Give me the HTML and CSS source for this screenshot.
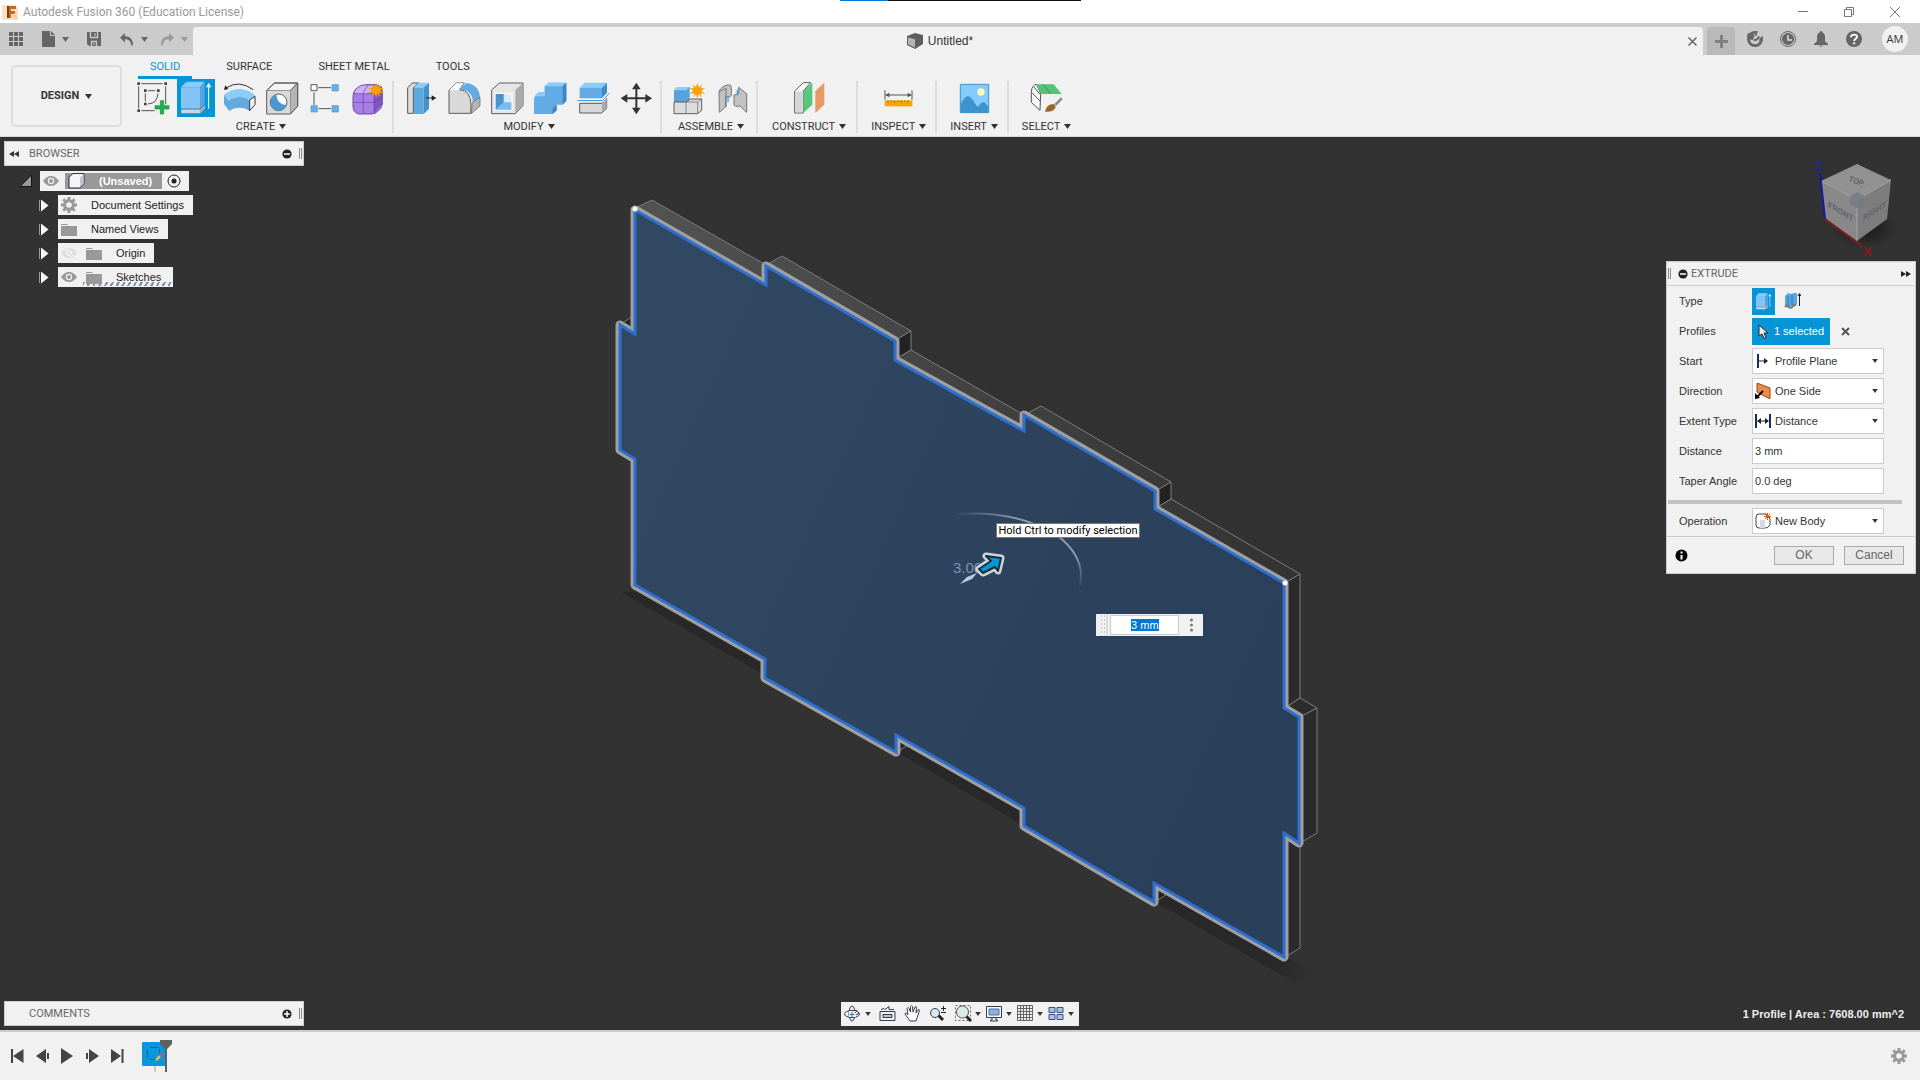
FILE: index.html
```html
<!DOCTYPE html>
<html lang="en">
<head>
<meta charset="utf-8">
<title>Autodesk Fusion 360 (Education License)</title>
<link rel="stylesheet" href="styles.css">
</head>
<body>
<svg class="defs" aria-hidden="true">
  <symbol id="caret" viewBox="0 0 7 5"><path d="M0 0h7L3.500 5z"/></symbol>
  <symbol id="gear" viewBox="0 0 16 16"><path fill-rule="evenodd" d="M6.500 0h3v2.300l1.500.6L12.700 1.300l2 2L13.100 5l.6 1.500H16v3h-2.300l-.6 1.500 1.600 1.700-2 2L11 13.100l-1.500.6V16h-3v-2.300L5 13.100l-1.700 1.600-2-2L2.900 11l-.6-1.500H0v-3h2.300L2.900 5 1.300 3.300l2-2L5 2.900l1.500-.6zM8 5.200a2.800 2.800 0 1 0 0 5.600 2.800 2.800 0 0 0 0-5.600z"/></symbol>
  <symbol id="folder" viewBox="0 0 16 13"><path d="M0 1h6l1 2h9v10H0z"/><path d="M0 2.500h6.500M8 1.500h8" stroke="#f1f1f1"/></symbol>
  <symbol id="eye" viewBox="0 0 16 12"><path d="M0 6Q3.500 1 8 1t8 5q-3.500 5-8 5T0 6z"/><circle cx="8" cy="6" r="3.200" fill="#f1f1f1"/><circle cx="8" cy="6" r="2"/></symbol>
  <symbol id="twist" viewBox="0 0 10 13"><path d="M.5 1v11" stroke="#999"/><path d="M2 .5l7.500 6-7.500 6z" fill="#f6f6f6"/></symbol>
  <symbol id="minus" viewBox="0 0 10 10"><circle cx="5" cy="5" r="4.600" fill="#222"/><path d="M2 5h6" stroke="#fff" stroke-width="1.500"/></symbol>
  <symbol id="extrude" viewBox="531 237 114 114">
    <path d="M544 326v14h56l13-13v-13z" fill="#d5d5d5"/><path d="M599 341l15-14v-14l-15 14z" fill="#aaa"/>
    <path d="M543 262l16-17h55l-14 17z" fill="#8acbfb"/><path d="M543 262h57v64h-57z" fill="#84c4f7"/><path d="M600 262l14-17v66l-14 15z" fill="#57a4de"/>
    <path d="M543 327h57l14-14" stroke="#1b7fc4" stroke-width="3" fill="none"/><path d="M626 326v-70" stroke="#fff" stroke-width="3"/><path d="M618 262l8-14 8 14z" fill="#fff"/>
  </symbol>
  <symbol id="star" viewBox="-24 -24 48 48"><path fill="#f8a100" d="M0-24L4-10 14-19 10-7 24-7 12 0 23 9 9 8 13 21 3 11 0 24-4 11-13 20-9 8-23 9-12 0-24-7-10-7-14-19-4-10z"/></symbol>
</svg>

<header class="titlebar">
  <svg class="app-logo" viewBox="0 0 16 16" width="16" height="16"><path d="M0 1h13l3 3v12H0z" fill="#fbe0c8"/><path d="M5 2h9v3H9v2h4v3H9v4H5z" fill="#c86a1c"/><path d="M5 2h2v12H5z" fill="#7d3c0c"/><path d="M9 12h5v3" stroke="#f0b98a" fill="none"/></svg>
  <span class="app-title">Autodesk Fusion 360 (Education License)</span>
  <span class="share-strip"></span>
  <div class="window-controls">
    <button aria-label="Minimize"><svg width="12" height="12"><path d="M1 5.500h10" stroke="#777"/></svg></button>
    <button aria-label="Restore"><svg width="12" height="12" fill="none" stroke="#777"><path d="M1.500 3.500h7v7h-7zM3.500 3V1.500h7v7H9"/></svg></button>
    <button aria-label="Close"><svg width="12" height="12"><path d="M1 1l10 10M11 1L1 11" stroke="#777"/></svg></button>
  </div>
</header>

<div class="tabbar">
  <div class="quick">
    <button aria-label="Data panel"><svg width="14" height="14" fill="#666"><path d="M0 0h4v4H0zM5 0h4v4H5zM10 0h4v4h-4zM0 5h4v4H0zM5 5h4v4H5zM10 5h4v4h-4zM0 10h4v4H0zM5 10h4v4H5zM10 10h4v4h-4z"/></svg></button>
    <button class="q-file" aria-label="File"><svg width="13" height="16" fill="#666"><path d="M0 0h8v5h5v11H0zM9 0l4 4H9z"/></svg><svg class="caret"><use href="#caret"/></svg></button>
    <button class="q-save" aria-label="Save"><svg width="14" height="14"><path d="M0 0h14v14H2l-2-2z" fill="#666"/><path d="M3.500 0v5.500h7V0M4.500 14V9.500h5V14" stroke="#cbcbcb" fill="none" stroke-width="1.300"/><path d="M8 1v3M7 11v2" stroke="#cbcbcb"/></svg></button>
    <button class="q-undo" aria-label="Undo"><svg width="14" height="13"><path d="M5 0v3.200c5 0 8 3 8 9-.7 0-2 .3-2 0 0-4-2-6-6-6V9.500L0 4.700z" fill="#666"/></svg><svg class="caret"><use href="#caret"/></svg></button>
    <button class="q-redo" aria-label="Redo"><svg width="14" height="13"><path d="M9 0v3.200C4 3.200 1 6 1 12.200h2c0-4 2-6 6-6V9.500l5-4.800z" fill="#999"/></svg><svg class="caret"><use href="#caret"/></svg></button>
  </div>
  <div class="doc-tab">
    <div class="doc-name"><svg width="16" height="16"><path d="M0 3l8-3 8 2v9l-8 5-8-4z" fill="#5e5e5e"/><path d="M1 4.500l7 1.700v8.300l-7-3.200z" fill="#b5b5b5"/></svg><span>Untitled*</span></div>
    <button class="doc-close" aria-label="Close tab"><svg width="9" height="9"><path d="M.5.5l8 8M8.500.5l-8 8" stroke="#666" stroke-width="1.500"/></svg></button>
  </div>
  <button class="new-tab" aria-label="New tab"><svg width="13" height="13"><path d="M6.500 0v13M0 6.500h13" stroke="#808080" stroke-width="3"/></svg></button>
  <div class="tools-right">
    <button aria-label="Extensions"><svg width="16" height="16" viewBox="321 93 48 48"><path d="M345 93a24 24 0 1 0 24 24q0-6-2-10l-9 9q3 16-13 17-15-1-15-15 1-14 13-16l8-8z" fill="#666"/><path d="M322 117v-16l14-3 8 10-6 12z" fill="#666"/><path d="M341 121l9-2 8-9M351 93l-5 14" stroke="#666" stroke-width="6" fill="none"/></svg></button>
    <button aria-label="Job status"><svg width="16" height="16" fill="none" stroke="#666"><circle cx="8" cy="8" r="7.500"/><circle cx="8" cy="8" r="5.500" fill="#666"/><path d="M8 4v5h4" stroke="#ddd" stroke-width="1.500"/></svg></button>
    <button aria-label="Notifications"><svg width="14" height="16" fill="#666"><path d="M7 0q1.500 0 1.500 1.500Q11 2.500 11 6v4l3 3v1H0v-1l3-3V6q0-3.500 2.500-4.500Q5.500 0 7 0zM5 14.500h4L7 16z"/></svg></button>
    <button aria-label="Help"><svg width="16" height="16"><circle cx="8" cy="8" r="8" fill="#666"/><path d="M5 6.200Q5 3.600 8 3.600t3 2.200c0 2-2.800 1.900-2.800 4.200M7.200 12.200h2" stroke="#fff" stroke-width="1.900" fill="none"/></svg></button>
    <button class="avatar">AM</button>
  </div>
</div>

<div class="ribbon">
  <button class="workspace">DESIGN <svg class="caret"><use href="#caret"/></svg></button>
  <div class="ribbon-main">
    <nav class="ribbon-tabs"><a href="#solid" class="active">SOLID</a><a href="#surface">SURFACE</a><a href="#sheet">SHEET METAL</a><a href="#tools">TOOLS</a></nav>
    <div class="groups">
      <section class="group">
        <div class="icons">
          <button aria-label="Create sketch"><svg width="33" height="33" viewBox="411 245 99 99" fill="none" stroke="#555" stroke-width="3"><path d="M424 250h64M497 258v54M416 258v66M424 331h40M444 271h22M436 279v24M474 279q-2 30-30 32"/><path d="M412 246h8v8h-8zM493 246h8v8h-8zM412 327h8v8h-8zM432 267h8v8h-8zM471 267h8v8h-8zM432 307h8v8h-8z" fill="#444" stroke="none"/><path d="M481 301h10v15h16v10h-16v15h-10v-15h-16v-10h16z" fill="#20b04b" stroke="#149138" stroke-width="2"/></svg></button>
          <button class="on" aria-label="Extrude"><svg width="38" height="38"><use href="#extrude"/></svg></button>
          <button aria-label="Revolve"><svg width="33" height="33" viewBox="667 246 99 99"><path d="M670 284q22-17 46-17 27 0 48 20l-18 14q-14-10-30-10-17 0-31 11z" fill="#8accfa"/><path d="M670 284l15 18q14-11 31-11t30 10v31q-14-10-30-9-18 0-30 10l-16-21z" fill="#63a9df"/><path d="M747 300l16-11v25l-16 18z" fill="#f3f3f3" stroke="#333" stroke-width="3"/><path d="M676 264q40-26 81 5" fill="none" stroke="#333" stroke-width="3"/><path d="M670 270l4-14 9 11z" fill="#222"/></svg></button>
          <button aria-label="Hole"><svg width="33" height="33" viewBox="797 245 99 99" stroke="#5d5d5d" stroke-width="3"><path d="M799 271l23-23h70l-22 23z" fill="#f4f4f4"/><path d="M870 271l22-23v69l-22 24z" fill="#b6b6b6"/><path d="M799 271h71v70h-71z" fill="#d9d9d9" stroke="none"/><path d="M799 271v70h71l22-23v-70h-70z" fill="none"/><circle cx="835" cy="306" r="25" fill="#fff"/><path d="M828 283q2 30 31 31-5 17-25 17-23-2-23-25 2-19 17-23z" fill="#4a97d3" stroke="none"/></svg></button>
          <button aria-label="Pattern"><svg width="33" height="33" viewBox="922 245 99 99" stroke="#555" stroke-width="3"><path d="M950 262h38M937 276v38M950 325h38"/><path d="M928 253h18v18h-18z" fill="#fff"/><g fill="#66afe6" stroke="#4b97cf" stroke-width="2"><path d="M991 253h19v19h-19zM928 316h19v19h-19zM991 316h19v19h-19z"/></g></svg></button>
          <button aria-label="Create form"><svg width="33" height="33" viewBox="1054 245 99 99"><path d="M1057 290q0-20 16-30 8-7 25-7h28q18 4 19 22v36q-2 14-14 22-6 8-20 8h-36q-18-4-18-22z" fill="#a77de6" stroke="#7248a8" stroke-width="3"/><path d="M1062 276q8-18 24-20h32l-8 20-16 5h-26z" fill="#cfb1fa"/><path d="M1120 276l24-20v56l-24 27z" fill="#7c55bd"/><path d="M1059 306h61l24-20M1088 341v-65l14-22M1120 276v62M1060 280h60" stroke="#6c3fae" stroke-width="2" fill="none"/><use href="#star" x="1103" y="246" width="47" height="47"/></svg></button>
        </div>
        <button class="group-label">CREATE <svg class="caret"><use href="#caret"/></svg></button>
      </section>
      <section class="group">
        <div class="icons">
          <button aria-label="Press pull"><svg width="33" height="33" viewBox="15 65 99 99"><path d="M23 82l14-14h20L40 82v77H23z" fill="#ddd" stroke="#555" stroke-width="3"/><path d="M41 82l15-15h31L71 82z" fill="#8accfa"/><path d="M42 82h29v79H42z" fill="#5fa8e0"/><path d="M71 82l16-15v78l-16 16z" fill="#4792cd"/><path d="M78 113h20" stroke="#222" stroke-width="3"/><path d="M95 105l14 8-14 8z" fill="#222"/></svg></button>
          <button aria-label="Fillet"><svg width="33" height="33" viewBox="146 65 99 99"><path d="M149 90l22-22h24l-14 20q34 3 34 46l-1 25h-65z" fill="#d9d9d9" stroke="#5d5d5d" stroke-width="3"/><path d="M151 89l20-20h22l-16 20z" fill="#fff"/><path d="M181 87l20-19q38 4 41 44l-21 14q-2-36-40-39z" fill="#63ace3"/><path d="M219 126l23-15v26l-26 23z" fill="#b4b4b4" stroke="#5d5d5d" stroke-width="2"/></svg></button>
          <button aria-label="Shell"><svg width="33" height="33" viewBox="275 65 99 99"><path d="M277 89l23-21h71v68l-23 24h-71z" fill="#e6e6e6" stroke="#5d5d5d" stroke-width="3"/><path d="M348 89l22-20v67l-22 23z" fill="#ababab"/><path d="M285 97h55v54h-55z" fill="#f8f8f8"/><path d="M289 101h47v47h-47z" fill="#d7ebfb"/><path d="M289 101h24v26l-24 21z" fill="#4792cf"/><path d="M289 148l24-22h23v22z" fill="#75bcf2"/></svg></button>
          <button aria-label="Combine"><svg width="33" height="33" viewBox="404 65 99 99"><path d="M406 108l12-12h18V78l12-11h53v54l-11 12h-18v17l-11 11h-65z" fill="#62abe4"/><path d="M406 108l12-12h18V78l12-11h53l-11 11h-53v30z" fill="#8accfa"/><path d="M490 78l11-11v54l-11 12zM460 144l12-11v17l-12 11z" fill="#3c87c1"/></svg></button>
          <button aria-label="Split body"><svg width="33" height="33" viewBox="533 65 99 99"><path d="M541 82l15-15h67l-15 15z" fill="#8accfa"/><path d="M541 82h67v32h-67z" fill="#62abe4"/><path d="M608 82l15-15v30l-15 16z" fill="#3f8ac4"/><path d="M541 129h67l14-15v29l-14 15h-67z" fill="#d8d8d8" stroke="#5d5d5d" stroke-width="3"/><path d="M608 129l14-15v29l-14 15z" fill="#aaa"/><path d="M534 121h76l20-23" fill="none" stroke="#fff" stroke-width="8"/><path d="M534 121h76l20-23" fill="none" stroke="#168ce0" stroke-width="3"/></svg></button>
          <button aria-label="Move"><svg width="33" height="33" viewBox="662 64 99 99"><path d="M711 76v75M673 113h76" stroke="#333" stroke-width="6"/><path d="M711 66l13 20h-26zM711 161l13-20h-26zM664 113l20-13v26zM758 113l-20-13v26z" fill="#333"/></svg></button>
        </div>
        <button class="group-label">MODIFY <svg class="caret"><use href="#caret"/></svg></button>
      </section>
      <section class="group">
        <div class="icons">
          <button aria-label="New component"><svg width="33" height="33" viewBox="823 65 99 99"><path d="M826 90l10-10h37v45h-47z" fill="#58a2dc"/><path d="M826 90l10-10h37l-10 10z" fill="#8accfa"/><path d="M826 125h36l14-9h33v34l-12 10h-71z" fill="#ddd" stroke="#5d5d5d" stroke-width="3"/><path d="M862 125h35l11-9M897 125v34M862 125v34" stroke="#5d5d5d" stroke-width="2" fill="none"/><use href="#star" x="872" y="67" width="48" height="48"/></svg></button>
          <button aria-label="Joint"><svg width="33" height="33" viewBox="952 65 99 99" stroke="#777" stroke-width="3"><path d="M961 94q6-16 28-21 10 0 9 9v24l-8 5-9-3v32l-19 16z" fill="#c2c2c2"/><path d="M962 94l20-10v56" fill="none"/><path d="M1020 81l24 19v56l-20-19-13 1-5-4v-30l14-4z" fill="#c2c2c2"/><path d="M988 109v17M1016 88v17" stroke="#168ce0"/></svg></button>
        </div>
        <button class="group-label">ASSEMBLE <svg class="caret"><use href="#caret"/></svg></button>
      </section>
      <section class="group single">
        <div class="icons">
          <button aria-label="Offset plane"><svg width="33" height="33" viewBox="41 245 99 99"><path d="M46 272l26-25h22L72 272v66H46z" fill="#f8f8f8" stroke="#5d5d5d" stroke-width="3"/><path d="M48 274h22v62H48z" fill="#d5d5d5"/><path d="M72 272l27-25v66l-27 25z" fill="#58c67c"/><path d="M108 272l27-25v66l-27 25z" fill="#e89a66"/></svg></button>
        </div>
        <button class="group-label">CONSTRUCT <svg class="caret"><use href="#caret"/></svg></button>
      </section>
      <section class="group single">
        <div class="icons">
          <button aria-label="Measure"><svg width="33" height="33" viewBox="308 245 99 99"><path d="M317 270v28M398 270v28M320 284h76" stroke="#555" stroke-width="3"/><path d="M318 284l12-7v14zM397 284l-12-7v14z" fill="#555"/><path d="M316 300h83v18h-83z" fill="#f9a600"/><path d="M326 300v8M336 300v5M346 300v8M356 300v5M366 300v8M376 300v5M386 300v8" stroke="#7a5a10" stroke-width="2"/></svg></button>
        </div>
        <button class="group-label">INSPECT <svg class="caret"><use href="#caret"/></svg></button>
      </section>
      <section class="group single">
        <div class="icons">
          <button aria-label="Insert canvas"><svg width="33" height="33" viewBox="528 243 99 99"><path d="M535 250h85v85h-85z" fill="#86cbff" stroke="#3d93cf" stroke-width="3"/><circle cx="597" cy="273" r="11" fill="#fff9c0"/><path d="M536 310q12-24 22-24t25 28l6 3q8-13 15-13t15 14v17h-83z" fill="#3d93cf"/></svg></button>
        </div>
        <button class="group-label">INSERT <svg class="caret"><use href="#caret"/></svg></button>
      </section>
      <section class="group single">
        <div class="icons">
          <button aria-label="Select"><svg width="33" height="33" viewBox="745 245 99 99"><path d="M749 273q2-19 16-21l12 27-2 51-26-24z" fill="#fafafa" stroke="#555" stroke-width="3"/><path d="M750 276l25 26M757 260l18 22" stroke="#555" stroke-width="3"/><path d="M762 252h54l24 29h-61z" fill="#53c377"/><path d="M785 252l22 29" stroke="#2b9a50" stroke-width="3"/><path d="M818 311l20-20 5 5-19 20z" fill="#888"/><path d="M790 334q4-23 25-23 6 2 7 8-4 17-32 15z" fill="#9a672b"/></svg></button>
        </div>
        <button class="group-label">SELECT <svg class="caret"><use href="#caret"/></svg></button>
      </section>
    </div>
  </div>
</div>

<main class="viewport">
  <svg class="model" viewBox="0 137 1920 893" preserveAspectRatio="xMidYMid meet">
    <defs>
      <linearGradient id="face" x1="0" y1="0" x2="1" y2=".5"><stop offset="0" stop-color="#324963"/><stop offset="1" stop-color="#2a405a"/></linearGradient>
      <linearGradient id="top" gradientUnits="userSpaceOnUse" x1="650" y1="200" x2="1290" y2="570"><stop offset="0" stop-color="#525252"/><stop offset="1" stop-color="#333"/></linearGradient>
      <linearGradient id="shadow" gradientUnits="userSpaceOnUse" x1="1280" y1="960" x2="1312" y2="982"><stop offset="0" stop-color="#282828"/><stop offset="1" stop-color="#323232"/></linearGradient>
      <linearGradient id="arc" gradientUnits="userSpaceOnUse" x1="955" y1="510" x2="1082" y2="588"><stop offset="0" stop-color="#909baa" stop-opacity="0"/><stop offset=".4" stop-color="#909baa"/><stop offset=".85" stop-color="#909baa"/><stop offset="1" stop-color="#909baa" stop-opacity="0"/></linearGradient>
      <path id="plate" d="M635 210L766 285V266L895 341V360L1024 431V415L1155 491V509L1284 583V708L1299 717V843L1284 833V957L1154 883V902L1024 826V808L896 735V752L765 678V659L635 585V459L620 450V325L635 334z"/>
    </defs>
    <path d="M621 592L1300 986L1318 976L660 590z" fill="url(#shadow)"/>
    <g fill="url(#top)" stroke="#7c7c7c">
      <path d="M619 325l16-10v20z" fill="#272727"/>
      <path d="M635 208L652 200L766 265v20z"/>
      <path d="M766 265L782 256L911 331L896 340z"/>
      <path d="M896 340L911 331V350L896 359z" fill="#222"/>
      <path d="M896 359L911 350L1024 415V431z"/>
      <path d="M1024 415L1041 406L1171 482L1156 491z"/>
      <path d="M1156 491L1171 482V499L1156 508z" fill="#222"/>
      <path d="M1156 508L1171 499L1300 574L1285 583z"/>
      <path d="M1285 583L1300 574V698L1285 708z" fill="#2b2b2b"/>
      <path d="M1285 708L1300 698L1317 708L1300 717z" fill="#2c2c2c"/>
      <path d="M1300 717L1317 708V833L1300 843z" fill="#2b2b2b"/>
      <path d="M1285 833L1300 843V948L1285 957z" fill="#2b2b2b"/>
      <path d="M1155 883L1170 892L1155 902zM897 735l14 8-14 9z" fill="#222"/>
    </g>
    <use href="#plate" fill="none" stroke="#a0a0a0" stroke-width="9" stroke-linejoin="round"/>
    <use href="#plate" fill="url(#face)" stroke="#2f6fd0" stroke-width="3"/>
    <circle cx="635" cy="209" r="2.500" fill="#fff"/><circle cx="1285" cy="583" r="2.500" fill="#fff"/>
    <path d="M957 514Q1018 510 1058 536Q1086 558 1080 586" fill="none" stroke="url(#arc)" stroke-width="2"/>
    <text x="953" y="573" class="dimension">3.00</text>
    <path d="M960 584l7-7 10-4-5 6z" fill="#bccbe0"/>
    <path d="M979 569L991 561L986 556L1001 558L998 571L995 567L983 573z" fill="#ddd" stroke="#d0d4d8" stroke-width="7" stroke-linejoin="round"/>
    <path d="M979 569L991 561L986 556L1001 558L998 571L995 567L983 573z" fill="#0a95d0" stroke="#10303f" stroke-width="2" stroke-linejoin="round"/>
  </svg>

  <svg class="viewcube" width="90" height="110" viewBox="1810 150 90 110">
    <defs><radialGradient id="cs"><stop offset="0" stop-color="#181818"/><stop offset="1" stop-color="#181818" stop-opacity="0"/></radialGradient></defs>
    <ellipse cx="1864" cy="228" rx="34" ry="20" fill="url(#cs)"/>
    <path d="M1857 164L1891 180L1857 200L1821 181z" fill="#919191"/><path d="M1821 181L1857 200V241L1825 219z" fill="#888"/><path d="M1857 200L1891 180L1887 219L1857 241z" fill="#7d7d7d"/>
    <path d="M1821 181L1857 200L1891 180M1857 200V241" stroke="#a5a5a5" fill="none"/>
    <path d="M1850 196l7-4 7 4v8l-7 4-7-4z" fill="#737a85" opacity=".8"/>
    <path d="M1820 173L1825 219" stroke="#1616a8" stroke-width="2"/><path d="M1825 219L1862 246" stroke="#8b1a1a" stroke-width="2"/>
    <text x="1815" y="171" class="axis" fill="#24249a">Z</text><text x="1863" y="256" class="axis" fill="#8b1a1a">X</text>
    <g class="cube-text"><text transform="translate(1848 181) rotate(20)">TOP</text><text transform="translate(1828 207) skewY(30)">FRONT</text><text transform="translate(1863 221) skewY(-32)">RIGHT</text></g>
  </svg>

  <aside class="left-dock">
    <div class="bar browser-bar"><svg width="10" height="6" fill="#333"><path d="M5 0v6L0 3zM10 0v6L5 3z"/></svg><span>BROWSER</span><button aria-label="Collapse"><svg width="10" height="10"><use href="#minus"/></svg></button><i class="grip"></i></div>
    <ul class="tree">
      <li class="root"><svg class="twist" width="12" height="12"><path d="M11.500 0v11.500H0z" fill="#999" stroke="#111"/></svg>
        <div class="node"><svg class="eye"><use href="#eye"/></svg><span class="selected"><svg width="17" height="16"><path d="M1 4l4-3.500h11v10L12 15H1z" fill="#f5f5f7" stroke="#2d3038"/><path d="M12 4.500l3.500-3.500v9.500L12 14.500z" fill="#c2c5cd"/></svg><b>(Unsaved)</b></span><svg width="14" height="14"><circle cx="7" cy="7" r="6" fill="none" stroke="#222"/><circle cx="7" cy="7" r="2.500" fill="#222"/></svg></div></li>
      <li><svg class="twist" width="10" height="13"><use href="#twist"/></svg><div class="node"><svg width="16" height="16" fill="#999"><use href="#gear"/></svg><span>Document Settings</span></div></li>
      <li><svg class="twist" width="10" height="13"><use href="#twist"/></svg><div class="node"><svg width="16" height="13" fill="#999"><use href="#folder"/></svg><span>Named Views</span></div></li>
      <li><svg class="twist" width="10" height="13"><use href="#twist"/></svg><div class="node"><svg class="eye off" viewBox="0 0 16 12"><use href="#eye"/><path d="M2 0l12 12" stroke="#f1f1f1" stroke-width="3"/><path d="M2 0l12 12" stroke="#ddd"/></svg><svg width="16" height="13" fill="#999"><use href="#folder"/></svg><span>Origin</span></div></li>
      <li><svg class="twist" width="10" height="13"><use href="#twist"/></svg><div class="node hatched"><svg class="eye"><use href="#eye"/></svg><svg width="16" height="13" fill="#999"><use href="#folder"/></svg><span>Sketches</span></div></li>
    </ul>
  </aside>

  <form class="extrude">
    <header><i class="grip"></i><svg width="10" height="10"><use href="#minus"/></svg><span>EXTRUDE</span><svg class="more" width="10" height="6" fill="#222"><path d="M0 0l5 3-5 3zM5 0l5 3-5 3z"/></svg></header>
    <div class="fields">
      <div class="row"><span class="lbl">Type</span><button type="button" class="type on" aria-label="Extrude"><svg width="19" height="19"><use href="#extrude"/></svg></button><button type="button" class="type" aria-label="Thin extrude"><svg width="17" height="18"><path d="M1 4l3-3 3 1 3-1h3v11l-3 3-3-1-3 2-3-2z" fill="#5ba7df"/><path d="M4 4v10M8 3v10" stroke="#2f76ad"/><path d="M1 15q2-3 4 0 2 2 4-1l3-2" stroke="#777" fill="none" stroke-width="2"/><path d="M15.500 14V3" stroke="#222"/><path d="M13.500 4l2-3 2 3z" fill="#222"/></svg></button></div>
      <div class="row"><span class="lbl">Profiles</span><button type="button" class="profile"><svg width="11" height="15"><path d="M1 1v11l3-2 2 4.500 2-1L6 9h4z" fill="#eee" stroke="#222"/></svg>1 selected</button><button type="button" class="clear" aria-label="Clear"><svg width="9" height="9"><path d="M1 1l7 7M8 1L1 8" stroke="#555" stroke-width="2"/></svg></button></div>
      <div class="row"><label class="lbl" for="start">Start</label><div class="pick"><svg width="16" height="16"><path d="M3 1v14" stroke="#16305c" stroke-width="2"/><path d="M4 8h6" stroke="#222"/><path d="M9 5l4 3-4 3z" fill="#222"/></svg><select id="start"><option>Profile Plane</option></select><svg class="caret"><use href="#caret"/></svg></div></div>
      <div class="row"><label class="lbl" for="direction">Direction</label><div class="pick"><svg width="16" height="16"><path d="M2 0l13 5v11L2 9z" fill="#ed8a48" stroke="#8f481d"/><path d="M8 8l-6 6" stroke="#000" stroke-width="2"/><path d="M0 16v-6l5 5z"/></svg><select id="direction"><option>One Side</option></select><svg class="caret"><use href="#caret"/></svg></div></div>
      <div class="row"><label class="lbl" for="extent">Extent Type</label><div class="pick"><svg width="16" height="16"><path d="M1 1v14M15 1v14" stroke="#16305c" stroke-width="2"/><path d="M3 8h10" stroke="#222"/><path d="M2 8l4-3v6zM14 8l-4-3v6z" fill="#222"/></svg><select id="extent"><option>Distance</option></select><svg class="caret"><use href="#caret"/></svg></div></div>
      <div class="row"><label class="lbl" for="distance">Distance</label><input id="distance" value="3 mm"></div>
      <div class="row"><label class="lbl" for="taper">Taper Angle</label><input id="taper" value="0.0 deg"></div>
      <hr>
      <div class="row"><label class="lbl" for="operation">Operation</label><div class="pick"><svg width="16" height="16"><path d="M1 4q0-3 3-3h7q4 2 4 5v6q-2 3-5 3H4q-3 0-3-3z" fill="#fff" stroke="#3b4358"/><path d="M5 7h5v8H5z" fill="#d8dbe2"/><path d="M12.500 0v7M9 3.500h7M10 1l5 5M15 1l-5 5" stroke="#e35b16"/></svg><select id="operation"><option>New Body</option></select><svg class="caret"><use href="#caret"/></svg></div></div>
    </div>
    <footer><svg width="13" height="13"><circle cx="6.500" cy="6.500" r="6"/><path d="M6.500 2.500v2M6.500 6v4.500" stroke="#fff" stroke-width="2"/></svg><button type="button">OK</button><button type="button">Cancel</button></footer>
  </form>

  <div class="tip">Hold Ctrl to modify selection</div>
  <div class="value-box"><i class="dots"></i><input id="value" aria-label="Distance value" value="3 mm"><svg width="3" height="14" fill="#777"><circle cx="1.500" cy="2" r="1.500"/><circle cx="1.500" cy="7" r="1.500"/><circle cx="1.500" cy="12" r="1.500"/></svg></div>

  <div class="bottom-dock">
    <div class="bar comments-bar"><span>COMMENTS</span><button aria-label="Expand"><svg width="10" height="10"><use href="#minus"/><path d="M5 2v6" stroke="#fff" stroke-width="1.500"/></svg></button><i class="grip"></i></div>
    <div class="navbar">
      <button aria-label="Orbit"><svg width="17" height="17" fill="none" stroke="#333c4c"><ellipse cx="8" cy="9" rx="7.500" ry="3.500"/><ellipse cx="8" cy="8.500" rx="3" ry="7.500"/><path d="M5 6h7v6H5z" fill="#f1f1f1" stroke="none"/><path d="M8 7v5M5.500 9.500h5" stroke="#1a80d0"/><path d="M10 5l3 1-2 2M12 10l3-2"/></svg><svg class="caret"><use href="#caret"/></svg></button>
      <button aria-label="Look at"><svg width="17" height="17" fill="none" stroke="#333c4c"><path d="M1 6.500h15v9H1z"/><path d="M4 9.500h9v3H4z" fill="#bfc3cb"/><path d="M2 4.500l3-1 1 1 4-3v3h5"/></svg></button>
      <button aria-label="Pan"><svg width="17" height="17"><path d="M6 16L1 9q0-2 3 .5L3 3.500q1-2 2 0L6.500 7V1.500q1-2 2 0L9 7l2-5q1.500-1 1.500.5L12 8l2-3q1.500-1 1.500.5L13 13l-1 3z" fill="#fff" stroke="#333c4c"/></svg></button>
      <button aria-label="Zoom"><svg width="18" height="17"><path d="M9 10l5 5" stroke="#222" stroke-width="3"/><circle cx="6" cy="8" r="4.500" fill="#d7e8ee" stroke="#333c4c"/><path d="M12 3.500h5M14.500 1v5M12 7.500h5" stroke="#222"/></svg></button>
      <button aria-label="Fit"><svg width="17" height="17"><path d="M.5.5h15v15H.5z" fill="none" stroke="#666" stroke-dasharray="2"/><path d="M11 11l5 5" stroke="#222" stroke-width="3"/><circle cx="7.500" cy="7" r="6" fill="#d8ecea" stroke="#555"/></svg><svg class="caret"><use href="#caret"/></svg></button>
      <button aria-label="Display"><svg width="17" height="17"><path d="M.5 1.500h15v11H.5z" fill="#fff" stroke="#333c4c"/><path d="M3 4h10v6H3z" fill="#8db2e0" stroke="#4a6ca0"/><path d="M6 13v2H4.500v1h7v-1H10v-2" stroke="#333c4c" fill="none"/></svg><svg class="caret"><use href="#caret"/></svg></button>
      <button aria-label="Grid"><svg width="17" height="17"><path d="M.5.5h15v15H.5zM3.500 1v15M6.500 1v15M9.500 1v15M12.500 1v15M1 3.500h15M1 6.500h15M1 9.500h15M1 12.500h15" fill="none" stroke="#666"/></svg><svg class="caret"><use href="#caret"/></svg></button>
      <button aria-label="Viewports"><svg width="17" height="17"><g fill="#a8c3e8" stroke="#34507e"><path d="M1 2.500h6v5H1zM9 2.500h6v5H9zM1 9.500h6v5H1zM9 9.500h6v5H9z"/></g></svg><svg class="caret"><use href="#caret"/></svg></button>
    </div>
    <output class="status">1 Profile | Area : 7608.00 mm^2</output>
  </div>
</main>

<footer class="timeline">
  <button aria-label="To start"><svg width="13" height="14"><path d="M0 0h2v14H0zM12.500 0v14L2 7z"/></svg></button>
  <button aria-label="Step back"><svg width="13" height="14"><path d="M10 0v14L0 7zM11 4h2v6h-2z"/></svg></button>
  <button aria-label="Play"><svg width="13" height="16"><path d="M0 0v16l12-8z"/></svg></button>
  <button aria-label="Step forward"><svg width="13" height="14"><path d="M3 0v14l10-7zM0 4h2v6H0z"/></svg></button>
  <button aria-label="To end"><svg width="13" height="14"><path d="M10.500 0h2v14h-2zM0 0v14l10-7z"/></svg></button>
  <button class="feature" aria-label="Sketch"><svg width="31" height="33"><path d="M12 26h2v6h-2z" fill="#c9c9c9"/><rect y="2" width="24" height="24" rx="1" fill="#0a96dc"/><path d="M8 7.500h8M5.500 10v8M8 19.500h6M17.500 9v4" stroke="#2c5d7a" fill="none"/><path d="M13 20l4-5 2 2-4 4z" fill="#f9b64b"/><path d="M17 15l2-2 2 2-2 2z" fill="#e04b55"/><path d="M18 0h12v4l-5 5v23h-2V9l-5-5z" fill="#606060"/></svg></button>
  <button class="settings" aria-label="Timeline settings"><svg width="16" height="16"><use href="#gear"/></svg></button>
</footer>
<script src="script.js"></script>
</body>
</html>
```
FILE: styles.css
```css
* { box-sizing: border-box; }
html, body { height: 100%; }
body { margin: 0; display: flex; flex-direction: column; overflow: hidden; background: #323232; color: #333; font: 11px/14px "Liberation Sans", Arial, sans-serif; }
button { border: 0; padding: 0; margin: 0; background: none; color: inherit; font: inherit; display: flex; align-items: center; justify-content: center; }
svg { display: block; flex: none; }
ul { list-style: none; margin: 0; padding: 0; }
.defs { width: 0; height: 0; position: absolute; }
.caret { width: 7px; height: 5px; fill: #333; }

/* Title bar */
.titlebar { height: 23px; background: #fff; display: flex; align-items: center; padding: 0 2px; position: relative; flex: none; }
.app-title { margin-left: 5px; flex: 1; color: #999; font: 12px/16px Roboto, "Noto Sans", sans-serif; }
.share-strip { position: absolute; top: 0; left: 43.75%; width: 241px; height: 1px; background: linear-gradient(90deg, #0078d7 48px, #111 48px); }
.window-controls { display: flex; }
.window-controls button { width: 46px; height: 21px; }

/* Document tabs */
.tabbar { height: 32px; background: #cbcbcb; display: flex; align-items: stretch; flex: none; }
.quick { width: 193px; padding-left: 9px; display: flex; align-items: center; }
.quick button { gap: 7px; }
.quick .caret { fill: #666; }
.q-file { margin-left: 19px; }
.q-save { margin-left: 18px; }
.q-undo { margin-left: 19px; }
.q-redo { margin-left: 12px; }
.quick .q-redo .caret { fill: #999; }
.doc-tab { flex: 1; margin-top: 4px; background: #f1f1f1; border-radius: 4px 4px 0 0; display: flex; align-items: center; }
.doc-name { flex: 1; display: flex; align-items: center; justify-content: center; gap: 5px; padding-left: 6px; font-size: 12px; }
.doc-close { width: 22px; height: 22px; }
.new-tab { width: 28px; margin: 4px 0 0 4px; background: #b9b9b9; border-radius: 4px 4px 0 0; }
.tools-right { display: flex; align-items: center; gap: 17px; padding: 0 12px; }
.tools-right button { width: 16px; }
.tools-right .avatar { width: 26px; height: 26px; margin-left: 3px; border-radius: 50%; background: #f1f1f1; font: 11px/14px "Open Sans", sans-serif; }

/* Ribbon */
.ribbon { height: 82px; background: #f1f1f1; border-bottom: 1px solid #d5dada; display: flex; flex: none; font-family: Roboto, sans-serif; }
.workspace { width: 111px; height: 62px; margin: 10px 6px 0 11px; border: 2px solid #ddd; border-radius: 5px; font-weight: bold; gap: 6px; }
.ribbon-tabs { display: flex; gap: 22px; padding-left: 10px; height: 24px; }
.ribbon-tabs a { padding: 5px 12px 0; color: #333; text-decoration: none; }
.ribbon-tabs .active { color: #0696d7; border-bottom: 3px solid #0696d7; }
.groups { display: flex; gap: 2px; }
.group { padding: 0 4px; display: flex; flex-direction: column; align-items: center; background: linear-gradient(#ddd, #ddd) right 2px / 2px 52px no-repeat; }
.group.single { padding: 0 12px; }
.group.single ~ .single { padding: 0 11px; }
.group:last-child { background: none; }
.icons { display: flex; height: 38px; }
.icons button { width: 43px; }
.single .icons button { width: 33px; }
.icons .on { width: 38px; margin: 0 3px 0 2px; background: #0696d7; }
.group-label { gap: 4px; height: 19px; }

/* Viewport */
.viewport { flex: 1; min-height: 0; position: relative; }
.model { position: absolute; inset: 0; width: 100%; height: 100%; }
.dimension { font-size: 15px; fill: #7d92ac; }
.viewcube { position: absolute; top: 13px; right: 20px; }
.axis { font: bold 13px "Liberation Sans", sans-serif; }
.cube-text { font: bold 8px Roboto, sans-serif; fill: #5d6570; }

.bar { width: 300px; height: 25px; background: #f1f1f1; border: 1px solid #ccc; display: flex; align-items: center; padding: 0 1px 0 4px; color: #666; font-family: Roboto, sans-serif; }
.bar span { flex: 1; margin-left: 10px; }
.comments-bar span { margin-left: 20px; }
.grip { width: 3px; height: 11px; border: solid #888; border-width: 0 1px; }
.bar .grip { margin-left: 7px; }
.left-dock { position: absolute; top: 4px; left: 4px; }
.tree { margin-top: 5px; display: flex; flex-direction: column; gap: 4px; color: #222; }
.tree li { display: flex; align-items: center; gap: 9px; padding-left: 35px; height: 20px; }
.tree .root { padding-left: 16px; gap: 8px; }
.node { height: 20px; background: #f1f1f1; display: flex; align-items: center; padding: 0 9px 0 3px; gap: 9px; }
.node span { margin-left: 5px; }
.eye { width: 16px; height: 12px; fill: #999; }
.eye.off { fill: #ddd; }
.root .node { padding: 0 8px 0 3px; gap: 5px; }
.node .selected { height: 16px; margin-left: 1px; background: #999; color: #fff; display: flex; align-items: center; gap: 14px; padding: 0 10px 0 3px; }
.hatched { background: repeating-linear-gradient(120deg, #8090b0 0 2px, #f1f1f1 2px 5px) 25px 15px / 88px 4px no-repeat #f1f1f1; padding-right: 12px; }

/* Extrude dialog */
.extrude { position: absolute; top: 124px; right: 4px; width: 250px; background: #f1f1f1; border: 1px solid #ccc; }
.extrude header { height: 24px; display: flex; align-items: center; gap: 3px; padding: 0 4px 0 1px; border-bottom: 1px solid #ccc; color: #666; font-family: Roboto, sans-serif; }
.extrude header .grip { margin-right: 4px; }
.more { margin-left: auto; }
.row { height: 30px; display: flex; align-items: center; }
.lbl { width: 85px; padding-left: 12px; }
.type { width: 23px; height: 27px; }
.type.on { background: #0696d7; margin-right: 6px; }
.profile { width: 78px; height: 27px; gap: 5px; background: #0696d7; color: #fff; }
.clear { margin-left: 11px; }
.row input, .pick { width: 132px; height: 26px; border: 1px solid #ccc; background: #fff; color: #333; font: inherit; }
.row input { padding: 0 2px; }
.pick { display: flex; align-items: center; padding: 0 5px 0 2px; gap: 4px; }
.pick .caret { width: 6px; height: 4px; }
.pick select { flex: 1; min-width: 0; border: 0; padding: 0; appearance: none; background: none; color: inherit; font: inherit; outline: 0; }
.fields hr { height: 4px; margin: 4px 13px 2px 1px; border: 0; background: #c2c2c2; }
.extrude footer { height: 37px; border-top: 1px solid #ccc; display: flex; align-items: center; gap: 10px; padding: 0 11px 0 8px; }
.extrude footer button { width: 60px; height: 19px; border: 1px solid #aaa; background: #e8e8e8; color: #666; font-size: 12px; }
.extrude footer svg { margin-right: auto; }

/* On-canvas helpers */
.tip { position: absolute; left: 51.900%; top: 43.200%; border: 1px solid #777; background: #fff; color: #000; padding: 0 1px; line-height: 13px; font-family: Roboto, sans-serif; white-space: nowrap; }
.value-box { position: absolute; left: 57.100%; top: 53.400%; width: 107px; height: 22px; background: #f1f1f1; display: flex; align-items: center; padding: 0 10px 0 4px; }
.value-box .dots { width: 8px; height: 22px; margin-right: 2px; background: radial-gradient(#ccc 1px, transparent 1px) 0 0 / 3px 4px; border-right: 2px solid #ddd; }
.value-box input { width: 69px; height: 20px; border: 1px solid #ccc; padding: 0; text-align: center; font: 11px/14px "Liberation Sans", sans-serif; outline: 0; margin-right: auto; background: #fff; }
.value-box input::selection { background: #0078d7; color: #fff; }

.bottom-dock { position: absolute; left: 4px; right: 4px; bottom: 4px; display: grid; grid-template-columns: 1fr auto 1fr; align-items: center; }
.navbar { height: 24px; background: #f1f1f1; display: flex; align-items: center; gap: 8px; padding: 0 8px 0 3px; }
.navbar button { gap: 4px; }
.navbar button:nth-child(n+5) { gap: 3px; margin-right: -3px; }
.navbar .caret { width: 6px; height: 4px; }
.status { justify-self: end; margin-right: 12px; color: #eee; font-weight: bold; }

/* Timeline */
.timeline { height: 50px; flex: none; background: #f1f1f1; border-top: 2px solid #ccc; display: flex; align-items: center; gap: 12px; padding: 0 13px 0 11px; fill: #444; }
.feature { margin-left: 6px; }
.settings { margin-left: auto; fill: #999; }
```
FILE: script.js
```js
const valueInput = document.getElementById('value');
valueInput.focus();
valueInput.select();
```
